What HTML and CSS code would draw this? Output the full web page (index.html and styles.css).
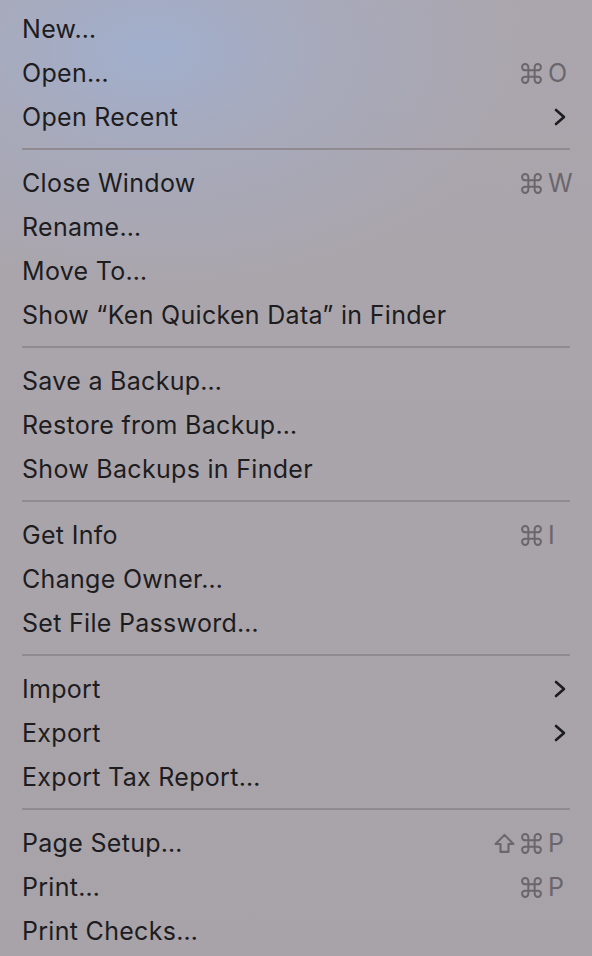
FILE: index.html
```html
<!DOCTYPE html>
<html lang="en">
<head>
<meta charset="utf-8">
<title>File menu</title>
<link rel="stylesheet" href="styles.css">
</head>
<body>
<svg width="0" height="0" class="defs" aria-hidden="true">
  <defs>
    <symbol id="cmd" viewBox="0 0 20 20">
      <path d="M7 7 V4 A3 3 0 1 0 4 7 H16 A3 3 0 1 0 13 4 V16 A3 3 0 1 0 16 13 H4 A3 3 0 1 0 7 16 Z" fill="none" stroke="currentColor" stroke-width="1.9"/>
    </symbol>
    <symbol id="shift" viewBox="0 0 20 20">
      <path d="M10 1.8 L1.5 10.5 H6.2 V18 H13.8 V10.5 H18.5 Z" fill="none" stroke="currentColor" stroke-width="2" stroke-linejoin="round"/>
    </symbol>
    <symbol id="chev" viewBox="0 0 12 18">
      <path d="M2 2 L10 9 L2 16" fill="none" stroke="currentColor" stroke-width="2.6" stroke-linecap="round" stroke-linejoin="round"/>
    </symbol>
  </defs>
</svg>
<div class="menu">
  <div class="group">
    <div class="item"><span class="label">New…</span></div>
    <div class="item"><span class="label">Open…</span><span class="sc"><span class="mods"><svg class="ic"><use href="#cmd"/></svg></span><span class="key">O</span></span></div>
    <div class="item"><span class="label">Open Recent</span><svg class="chev"><use href="#chev"/></svg></div>
  </div>
  <div class="sep"></div>
  <div class="group">
    <div class="item"><span class="label">Close Window</span><span class="sc"><span class="mods"><svg class="ic"><use href="#cmd"/></svg></span><span class="key">W</span></span></div>
    <div class="item"><span class="label">Rename…</span></div>
    <div class="item"><span class="label">Move To…</span></div>
    <div class="item"><span class="label">Show “Ken Quicken Data” in Finder</span></div>
  </div>
  <div class="sep"></div>
  <div class="group">
    <div class="item"><span class="label">Save a Backup…</span></div>
    <div class="item"><span class="label">Restore from Backup…</span></div>
    <div class="item"><span class="label">Show Backups in Finder</span></div>
  </div>
  <div class="sep"></div>
  <div class="group">
    <div class="item"><span class="label">Get Info</span><span class="sc"><span class="mods"><svg class="ic"><use href="#cmd"/></svg></span><span class="key">I</span></span></div>
    <div class="item"><span class="label">Change Owner…</span></div>
    <div class="item"><span class="label">Set File Password…</span></div>
  </div>
  <div class="sep"></div>
  <div class="group">
    <div class="item"><span class="label">Import</span><svg class="chev"><use href="#chev"/></svg></div>
    <div class="item"><span class="label">Export</span><svg class="chev"><use href="#chev"/></svg></div>
    <div class="item"><span class="label">Export Tax Report…</span></div>
  </div>
  <div class="sep"></div>
  <div class="group">
    <div class="item"><span class="label">Page Setup…</span><span class="sc"><span class="mods"><svg class="ic"><use href="#shift"/></svg><svg class="ic"><use href="#cmd"/></svg></span><span class="key">P</span></span></div>
    <div class="item"><span class="label">Print…</span><span class="sc"><span class="mods"><svg class="ic"><use href="#cmd"/></svg></span><span class="key">P</span></span></div>
    <div class="item"><span class="label">Print Checks…</span></div>
  </div>
</div>
</body>
</html>
```
FILE: styles.css
```css
html, body {
  margin: 0;
  padding: 0;
  height: 100%;
}
body {
  width: 592px;
  height: 956px;
  overflow: hidden;
  font-family: "Inter", "Noto Sans", sans-serif;
  background-color: #aaa5ab;
  background-image:
    radial-gradient(ellipse 380px 240px at 150px 50px, rgba(160, 176, 208, 0.9) 0%, rgba(165, 172, 196, 0.6) 45%, rgba(170, 165, 171, 0) 100%),
    linear-gradient(180deg, #aba6ad 0%, #a9a4aa 60%, #a8a3a9 100%);
}
.defs {
  position: absolute;
  width: 0;
  height: 0;
}
.menu {
  padding-top: 7px;
  display: flex;
  flex-direction: column;
}
.group {
  display: flex;
  flex-direction: column;
}
.item {
  height: 44px;
  display: flex;
  align-items: center;
  padding: 0 22px 0 22px;
  color: #1d1c1f;
  font-size: 25px;
  letter-spacing: 0.3px;
}
.label {
  flex: 1;
  white-space: nowrap;
}
.sc {
  display: flex;
  align-items: center;
  color: #6a666c;
}
.mods {
  display: flex;
  align-items: center;
  gap: 6px;
}
.ic {
  width: 21px;
  height: 21px;
}
.key {
  width: 22px;
  margin-left: 6px;
  text-align: left;
}
.chev {
  width: 12px;
  height: 18px;
  margin-right: 4px;
  color: #1d1c1f;
}
.sep {
  height: 2px;
  margin: 9px 22px 11px 22px;
  background: #8f8b91;
}
```
